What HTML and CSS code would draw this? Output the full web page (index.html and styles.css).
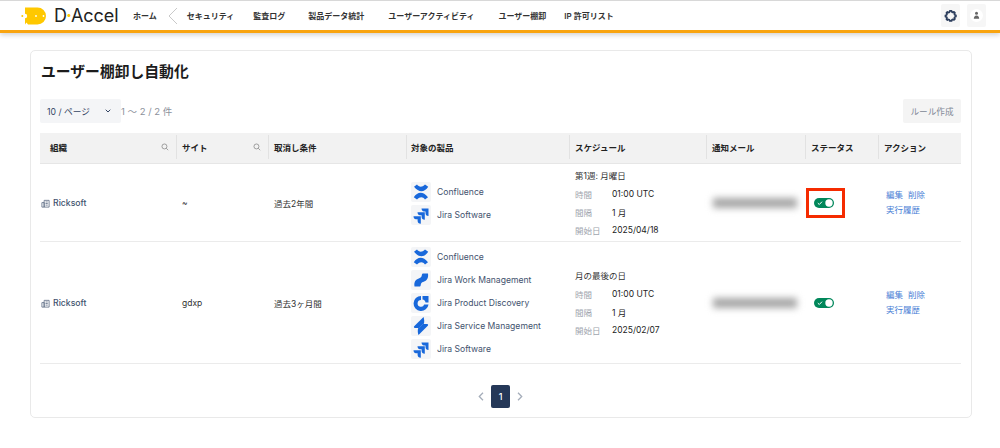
FILE: index.html
```html
<!DOCTYPE html>
<html lang="ja">
<head>
<meta charset="utf-8">
<title>ユーザー棚卸し自動化</title>
<link rel="stylesheet" href="styles.css">
</head>
<body>
<svg class="defs" width="0" height="0" aria-hidden="true">
  <defs>
    <symbol id="i-confluence" viewBox="0 0 20 20">
      <path d="M3 4.800 6 2.600C8 5.200 10.800 5.800 14 2.600L17.200 4.800C13.600 10.400 8 11 3 4.800z" fill="#1868db"/>
      <path d="M17 15.200 14 17.400C12 14.800 9.200 14.200 6 17.400L2.800 15.200C6.400 9.600 12 9 17 15.200z" fill="#1868db"/>
    </symbol>
    <symbol id="i-jira" viewBox="0 0 20 20">
      <path d="M10.500 3.500h7V11c-2 0-3-1.300-3-3V6.500H13C11.500 6.500 10.500 5 10.500 3.500z" fill="#1868db"/>
      <path d="M6.500 7.300h7.300v7.500c-2 0-3.200-1.300-3.200-3v-1.500H9c-1.400 0-2.500-1.300-2.500-3z" fill="#1868db"/>
      <path d="M2.500 11.300h7.300v7.500c-2 0-3.200-1.300-3.200-3v-1.500H5c-1.400 0-2.500-1.300-2.500-3z" fill="#1868db"/>
    </symbol>
    <symbol id="i-work" viewBox="0 0 20 20">
      <path d="M3.500 16.500c-.8-4.600 1.200-7.200 4.300-8 2.400-.6 2.900-1.900 3.100-3.700.1-.7.500-1.300 1.200-1.300h4.900c.7 4.800-1.300 7.400-4.300 8.200-2.300.6-2.800 1.800-3 3.600-.1.800-.5 1.200-1.200 1.200z" fill="#1868db"/>
    </symbol>
    <symbol id="i-discovery" viewBox="0 0 20 20">
      <path d="M10 3a7.500 7.500 0 1 0 7.500 8.500h-4.300a3.400 3.400 0 1 1-3.200-4.500z" fill="#1868db"/>
      <path d="M11.500 3h6v6.500h-3c0-1.500-1.300-3-3-3z" fill="#1868db"/>
    </symbol>
    <symbol id="i-service" viewBox="0 0 20 20">
      <path d="M12.500 1 3.200 10.300c-.6.600-.3 1.700.6 1.700h4L13 7.500c.4-2.500.2-4.800-.5-6.500z" fill="#1868db"/>
      <path d="M7.500 19 16.800 9.700c.6-.6.300-1.700-.6-1.700h-4L7 12.500c-.4 2.500-.2 4.800.5 6.500z" fill="#1868db"/>
    </symbol>
    <symbol id="i-search" viewBox="0 0 10 10">
      <circle cx="4.300" cy="4.300" r="3.100" fill="none" stroke="#808080" stroke-width=".9"/>
      <path d="M6.600 6.600 9 9" stroke="#808080" stroke-width=".9" fill="none"/>
    </symbol>
    <symbol id="i-org" viewBox="0 0 10 10">
      <path d="M3.500 1.500h5.500v7.500H3.500zM1 4h2.500v5H1zM5 3.300h2.500M5 5h2.500M5 6.800h2.500" fill="none" stroke="#5e6c84" stroke-width=".9"/>
    </symbol>
    <symbol id="i-toggle" viewBox="0 0 20 10">
      <rect width="20" height="10" rx="5" fill="#00875a"/>
      <circle cx="15" cy="5" r="3.700" fill="#fff"/>
      <path d="M3.800 5.100 5.300 6.500 8 3.700" fill="none" stroke="#fff" stroke-width="1"/>
    </symbol>
  </defs>
</svg>

<header class="topbar">
  <a class="logo">
    <svg class="logo-mark" viewBox="0 0 27 18" aria-hidden="true">
      <circle cx="2.300" cy="9" r="1" fill="#ffc800"/>
      <path d="M5 .5h12.500a8.500 8.500 0 0 1 0 17H8L6.500 15.500 5 17.500V11.200a2.200 2.200 0 0 0 0-4.400z" fill="#ffc800"/>
      <circle cx="16" cy="9" r=".9" fill="#fff"/>
      <circle cx="23.500" cy="9" r=".9" fill="#fff"/>
    </svg>
    <span class="logo-text">D<span class="logo-dot">·</span>Accel</span>
  </a>
  <nav class="nav">
    <a class="nav-item nav-home">ホーム</a>
    <svg class="nav-back" viewBox="0 0 11 18" aria-hidden="true"><path d="M10 1 2 9l8 8" fill="none" stroke="#c9c9c9" stroke-width="1"/></svg>
    <a class="nav-item nav-sec">セキュリティ</a>
    <a class="nav-item nav-log">監査ログ</a>
    <a class="nav-item nav-stat">製品データ統計</a>
    <a class="nav-item nav-act">ユーザーアクティビティ</a>
    <a class="nav-item nav-rev">ユーザー棚卸</a>
    <a class="nav-item">IP 許可リスト</a>
  </nav>
  <div class="top-actions">
    <button class="icon-btn" type="button" aria-label="設定">
      <svg width="13" height="13" viewBox="0 0 24 24" aria-hidden="true"><path d="M12 3.500l2 .0.700 2.200 1.700.7 2-1.100 1.800 1.800-1.100 2 .7 1.700 2.200.7v2.500l-2.200.7-.7 1.700 1.100 2-1.800 1.800-2-1.100-1.700.7-.7 2.200H10.700L10 20l-1.700-.7-2 1.100-1.800-1.800 1.100-2-.7-1.700-2.200-.7V11.700l2.200-.7.7-1.700-1.100-2 1.800-1.800 2 1.100L10 5.900l.7-2.400z" fill="none" stroke="#2c3e5d" stroke-width="3.200" stroke-linejoin="round"/></svg>
    </button>
    <button class="icon-btn" type="button" aria-label="ユーザー">
      <svg width="13" height="13" viewBox="0 0 13 13" aria-hidden="true"><circle cx="6.500" cy="6.500" r="6.500" fill="#fff"/><circle cx="6.500" cy="4.300" r="1.500" fill="#666"/><path d="M3.800 9.800c0-2 1-3.300 2.700-3.300s2.700 1.300 2.700 3.300z" fill="#666"/></svg>
    </button>
  </div>
</header>

<main class="card">
  <h1 class="title">ユーザー棚卸し自動化</h1>
  <div class="toolbar">
    <div class="toolbar-left">
      <div class="select">
        <span>10 / ページ</span>
        <svg width="6" height="4" viewBox="0 0 6 4" aria-hidden="true"><path d="M.7.7 3 3 5.300.7" fill="none" stroke="#344563" stroke-width="1"/></svg>
      </div>
      <span class="count">1 〜 2 / 2 件</span>
    </div>
    <button class="ghost-btn" type="button">ルール作成</button>
  </div>

  <table class="grid">
    <colgroup>
      <col class="c-org"><col class="c-site"><col class="c-cond"><col class="c-prod"><col class="c-sch"><col class="c-mail"><col class="c-stat"><col class="c-act">
    </colgroup>
    <thead>
      <tr>
        <th class="th-org"><div class="th-in"><span>組織</span><svg class="s-ico"><use href="#i-search"/></svg></div></th>
        <th><div class="th-in"><span>サイト</span><svg class="s-ico"><use href="#i-search"/></svg></div></th>
        <th>取消し条件</th>
        <th class="th-prod">対象の製品</th>
        <th>スケジュール</th>
        <th>通知メール</th>
        <th>ステータス</th>
        <th>アクション</th>
      </tr>
    </thead>
    <tbody>
      <tr class="row-a">
        <td class="org"><svg class="org-ico"><use href="#i-org"/></svg>Ricksoft</td>
        <td class="site">~</td>
        <td>過去2年間</td>
        <td class="prod">
          <ul class="products">
            <li><span class="p-ico"><svg><use href="#i-confluence"/></svg></span>Confluence</li>
            <li><span class="p-ico"><svg><use href="#i-jira"/></svg></span>Jira Software</li>
          </ul>
        </td>
        <td>
          <div class="sch-head">第1週: 月曜日</div>
          <dl class="sch"><dt>時間</dt><dd>01:00 UTC</dd><dt>間隔</dt><dd>1 月</dd><dt>開始日</dt><dd>2025/04/18</dd></dl>
        </td>
        <td><div class="blur"></div></td>
        <td class="stat"><svg class="toggle"><use href="#i-toggle"/></svg><span class="mark"></span></td>
        <td class="acts"><div><a>編集</a><a>削除</a></div><div><a>実行履歴</a></div></td>
      </tr>
      <tr class="row-b">
        <td class="org"><svg class="org-ico"><use href="#i-org"/></svg>Ricksoft</td>
        <td>gdxp</td>
        <td>過去3ヶ月間</td>
        <td class="prod">
          <ul class="products">
            <li><span class="p-ico"><svg><use href="#i-confluence"/></svg></span>Confluence</li>
            <li><span class="p-ico"><svg><use href="#i-work"/></svg></span>Jira Work Management</li>
            <li><span class="p-ico"><svg><use href="#i-discovery"/></svg></span>Jira Product Discovery</li>
            <li><span class="p-ico"><svg><use href="#i-service"/></svg></span>Jira Service Management</li>
            <li><span class="p-ico"><svg><use href="#i-jira"/></svg></span>Jira Software</li>
          </ul>
        </td>
        <td>
          <div class="sch-head">月の最後の日</div>
          <dl class="sch"><dt>時間</dt><dd>01:00 UTC</dd><dt>間隔</dt><dd>1 月</dd><dt>開始日</dt><dd>2025/02/07</dd></dl>
        </td>
        <td><div class="blur"></div></td>
        <td class="stat"><svg class="toggle"><use href="#i-toggle"/></svg></td>
        <td class="acts"><div><a>編集</a><a>削除</a></div><div><a>実行履歴</a></div></td>
      </tr>
    </tbody>
  </table>

  <div class="pager">
    <svg width="6" height="9" viewBox="0 0 6 9" aria-hidden="true"><path d="M5 .8 1.300 4.500 5 8.200" fill="none" stroke="#a5adba" stroke-width="1.300"/></svg>
    <span class="page-cur">1</span>
    <svg width="6" height="9" viewBox="0 0 6 9" aria-hidden="true"><path d="M1 .8 4.700 4.500 1 8.200" fill="none" stroke="#a5adba" stroke-width="1.300"/></svg>
  </div>
</main>
</body>
</html>
```
FILE: styles.css
```css
* { box-sizing: border-box; }
html, body { margin: 0; padding: 0; }
body {
  width: 1000px;
  height: 448px;
  overflow: hidden;
  background: #fff;
  color: #253858;
  font-family: Inter, "Noto Sans CJK JP", sans-serif;
  font-size: 9px;
}
.defs { display: block; height: 0; }

.topbar {
  height: 33px;
  border-top: 1px solid #d8d8d8;
  border-bottom: 3px solid #f9a40f;
  background: #fff;
  box-shadow: 0 2px 5px rgba(0, 0, 0, .18);
  display: flex;
  align-items: center;
  padding: 0 14px 0 20px;
}
.logo { display: flex; align-items: center; gap: 7px; width: 113px; }
.logo-mark { width: 27px; height: 18px; flex: none; }
.logo-text { font-family: Inter, sans-serif; font-size: 18px; color: #222; letter-spacing: -.05px; line-height: 1; }
.logo-dot { color: #ffc800; font-weight: 700; margin: 0 -1px; }

.nav { display: flex; align-items: center; flex: 1; }
.nav-item { font-size: 8px; font-weight: 600; color: #333; white-space: nowrap; line-height: 12px; }
.nav-back { width: 11px; height: 18px; margin: 0 9px 0 10px; }
.nav-sec { margin-right: 19px; }
.nav-log { margin-right: 23px; }
.nav-stat { margin-right: 24px; }
.nav-act { margin-right: 24px; }
.nav-rev { margin-right: 18px; }

.top-actions { display: flex; gap: 7px; margin-bottom: 1px; }
.icon-btn {
  width: 19px;
  height: 23px;
  border: 0;
  border-radius: 2px;
  background: #f6f6f6;
  padding: 0;
  display: flex;
  align-items: center;
  justify-content: center;
}

.card {
  margin: 17px 28px 0 30px;
  width: 942px;
  height: 368px;
  border: 1px solid #e9e9e9;
  border-radius: 5px;
  background: #fff;
  padding: 0 9px;
}
.title {
  margin: 10px 0 0 1px;
  font-size: 14.800px;
  line-height: 22px;
  font-weight: 600;
  color: #1c1c1c;
}
.toolbar {
  margin-top: 16px;
  display: flex;
  justify-content: space-between;
  align-items: center;
  height: 24px;
  width: 921px;
}
.toolbar-left { display: flex; align-items: center; }
.select {
  width: 81px;
  height: 24px;
  background: #f4f5f7;
  border-radius: 2px;
  padding: 0 10px 0 7px;
  display: flex;
  align-items: center;
  justify-content: space-between;
  color: #344563;
  font-size: 8.700px;
}
.count { color: #8c919b; font-size: 9.500px; }
.ghost-btn {
  width: 58px;
  height: 24px;
  border: 0;
  border-radius: 2px;
  background: #f4f4f4;
  color: #808794;
  font: inherit;
  font-size: 8.600px;
  padding: 0;
}

.grid {
  margin-top: 10px;
  width: 921px;
  table-layout: fixed;
  border-collapse: collapse;
}
.c-org { width: 136px; }
.c-site { width: 92px; }
.c-cond { width: 138px; }
.c-prod { width: 163px; }
.c-sch { width: 137px; }
.c-mail { width: 99px; }
.c-stat { width: 73px; }
.c-act { width: 83px; }

.grid th {
  height: 30px;
  padding: 0 6px 1px;
  background: #f2f2f2;
  border-bottom: 1px solid #e6e6e6;
  text-align: left;
  font-size: 8.500px;
  font-weight: 600;
  color: #222;
  position: relative;
}
.grid th + th::before {
  content: "";
  position: absolute;
  left: 0;
  top: 2px;
  bottom: 4px;
  width: 1px;
  background: #e2e2e2;
}
.grid .th-org { padding-left: 10px; }
.grid .th-prod { padding-left: 5px; }
.th-in { display: flex; justify-content: space-between; align-items: center; }
.s-ico { width: 8px; height: 8px; margin-right: 1px; }

.grid td {
  padding: 2px 6px 0;
  border-bottom: 1px solid #ebebeb;
  vertical-align: middle;
  color: #333;
  font-size: 8.500px;
}
.row-a { height: 78px; }
.row-b { height: 122px; }
.grid td.org { padding-left: 0; color: #42526e; font-weight: 500; white-space: nowrap; font-size: 8.700px; }
.grid td.prod { padding-left: 5px; }
.org-ico { width: 9px; height: 9px; margin: 0 3px 0 1px; vertical-align: -1.500px; }

.products { list-style: none; margin: 0; padding: 0; display: flex; flex-direction: column; gap: 3px; }
.products li { display: flex; align-items: center; gap: 6px; height: 20px; color: #42526e; font-size: 8.600px; white-space: nowrap; }
.p-ico { width: 20px; height: 20px; background: #f4f5f7; border-radius: 2px; flex: none; display: block; }
.p-ico svg { width: 20px; height: 20px; display: block; }

.sch-head { line-height: 18px; color: #333; }
.sch { margin: 0; display: grid; grid-template-columns: 37px 1fr; grid-auto-rows: 18px; align-items: center; color: #333; }
.sch dt { color: #a0a5ae; }
.sch dd { margin: 0; color: #222; }

.blur { width: 84px; height: 10px; background: #a6a6a6; filter: blur(3.500px); margin-left: 1px; }

.grid td.stat { position: relative; padding-left: 9px; }
.toggle { width: 20px; height: 10px; display: block; }
.mark {
  position: absolute;
  left: 1px;
  top: 24px;
  width: 39px;
  height: 30px;
  border: 3px solid #f52b00;
}

.acts { line-height: 15.500px; }
.acts a { color: #4a7fd6; font-size: 8.500px; }
.acts a + a { margin-left: 5px; }
.grid td.acts { padding-left: 8px; }

.pager {
  margin-top: 21px;
  width: 921px;
  display: flex;
  justify-content: center;
  align-items: center;
  gap: 7px;
}
.page-cur {
  width: 19px;
  height: 23px;
  border-radius: 2px;
  background: #253858;
  color: #fff;
  display: flex;
  align-items: center;
  justify-content: center;
  font-size: 9px;
  font-weight: 500;
}
```
